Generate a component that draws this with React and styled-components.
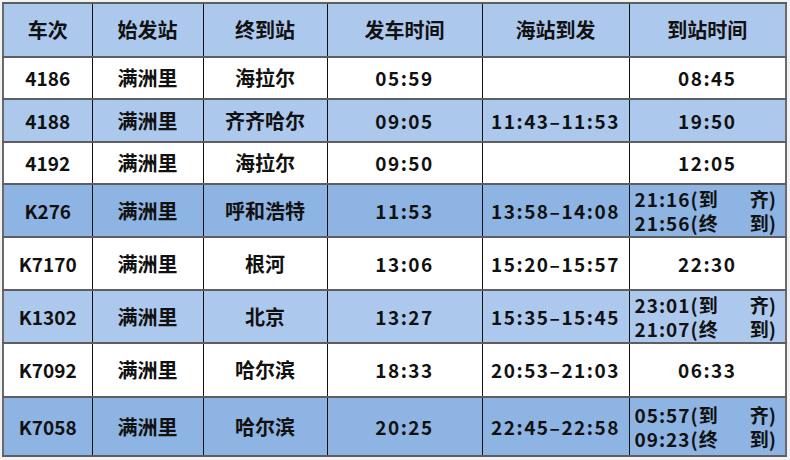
import React from 'react'
import styled, {createGlobalStyle} from 'styled-components'

const GlobalStyle = createGlobalStyle`
  html, body {
    margin: 0;
    padding: 0;
    background: #f3f3f3;
  }
`

const columns = [89, 111, 124, 155, 147, 157]
const headers = ['车次', '始发站', '终到站', '发车时间', '海站到发', '到站时间']

const rows = [
    {no: '4186', from: '满洲里', to: '海拉尔', dep: '05:59', hai: '', arr: ['08:45'], tone: 'white', h: 42},
    {no: '4188', from: '满洲里', to: '齐齐哈尔', dep: '09:05', hai: '11:43–11:53', arr: ['19:50'], tone: 'light', h: 43},
    {no: '4192', from: '满洲里', to: '海拉尔', dep: '09:50', hai: '', arr: ['12:05'], tone: 'white', h: 42},
    {no: 'K276', from: '满洲里', to: '呼和浩特', dep: '11:53', hai: '13:58–14:08', arr: [['21:16(到', '齐)'], ['21:56(终', '到)']], tone: 'dark', h: 53},
    {no: 'K7170', from: '满洲里', to: '根河', dep: '13:06', hai: '15:20–15:57', arr: ['22:30'], tone: 'white', h: 53},
    {no: 'K1302', from: '满洲里', to: '北京', dep: '13:27', hai: '15:35–15:45', arr: [['23:01(到', '齐)'], ['21:07(终', '到)']], tone: 'light', h: 53},
    {no: 'K7092', from: '满洲里', to: '哈尔滨', dep: '18:33', hai: '20:53–21:03', arr: ['06:33'], tone: 'white', h: 54},
    {no: 'K7058', from: '满洲里', to: '哈尔滨', dep: '20:25', hai: '22:45–22:58', arr: [['05:57(到', '齐)'], ['09:23(终', '到)']], tone: 'dark', h: 59},
]

const tones = {
    white: '#ffffff',
    light: '#adc8ed',
    dark: '#8eb4e3',
}

const App = () => {
    return (
        <>
            <GlobalStyle/>
            <Page>
                <Table>
                    <colgroup>
                        {columns.map((w, i) => <col key={i} style={{width: w}}/>)}
                    </colgroup>
                    <thead>
                    <Row tone="light" $h={54}>
                        {headers.map(h => <HeadCell key={h}>{h}</HeadCell>)}
                    </Row>
                    </thead>
                    <tbody>
                    {rows.map(r => (
                        <Row key={r.no} tone={r.tone} $h={r.h}>
                            <Cell $small>{r.no}</Cell>
                            <Cell>{r.from}</Cell>
                            <Cell>{r.to}</Cell>
                            <TimeCell>{r.dep}</TimeCell>
                            <TimeCell>{r.hai}</TimeCell>
                            {r.arr.length === 1 ? (
                                <TimeCell>{r.arr[0]}</TimeCell>
                            ) : (
                                <ArrivalCell>
                                    {r.arr.map(([left, right]) => (
                                        <ArrivalLine key={left}>
                                            <span>{left}</span>
                                            <span>{right}</span>
                                        </ArrivalLine>
                                    ))}
                                </ArrivalCell>
                            )}
                        </Row>
                    ))}
                    </tbody>
                </Table>
            </Page>
        </>
    )
}

const Page = styled.div`
  padding: 2px 4px 0 2px;
  width: 790px;
  height: 460px;
  box-sizing: border-box;
`
const Table = styled.table`
  border-collapse: collapse;
  table-layout: fixed;
  width: 784px;
  background: #fff;
  border: 2px solid #6a6a6a;
  font-family: "Noto Sans CJK SC", "Noto Sans", sans-serif;
  font-weight: 700;
  color: #111;
`
const Row = styled.tr`
  height: ${props => props.$h}px;
  background: ${props => tones[props.tone]};
`
const Cell = styled.td`
  padding: 0;
  text-align: center;
  vertical-align: middle;
  font-size: ${props => props.$small ? 19 : 20}px;
  line-height: 24px;
  border-top: 2px solid #5e5e5e;
  border-bottom: 2px solid #5e5e5e;
  border-left: 1px solid #111;
  border-right: 1px solid #111;
`
const HeadCell = styled(Cell).attrs({as: 'th'})`
  font-weight: 700;
`
const TimeCell = styled(Cell)`
  font-size: 19px;
  letter-spacing: 1.5px;
`
const ArrivalCell = styled(Cell)`
  padding: 0 9px 0 5px;
  font-size: 19px;
`
const ArrivalLine = styled.div`
  display: flex;
  justify-content: space-between;
  line-height: 24px;

  span:first-child {
    letter-spacing: 1px;
  }
`

export default App
